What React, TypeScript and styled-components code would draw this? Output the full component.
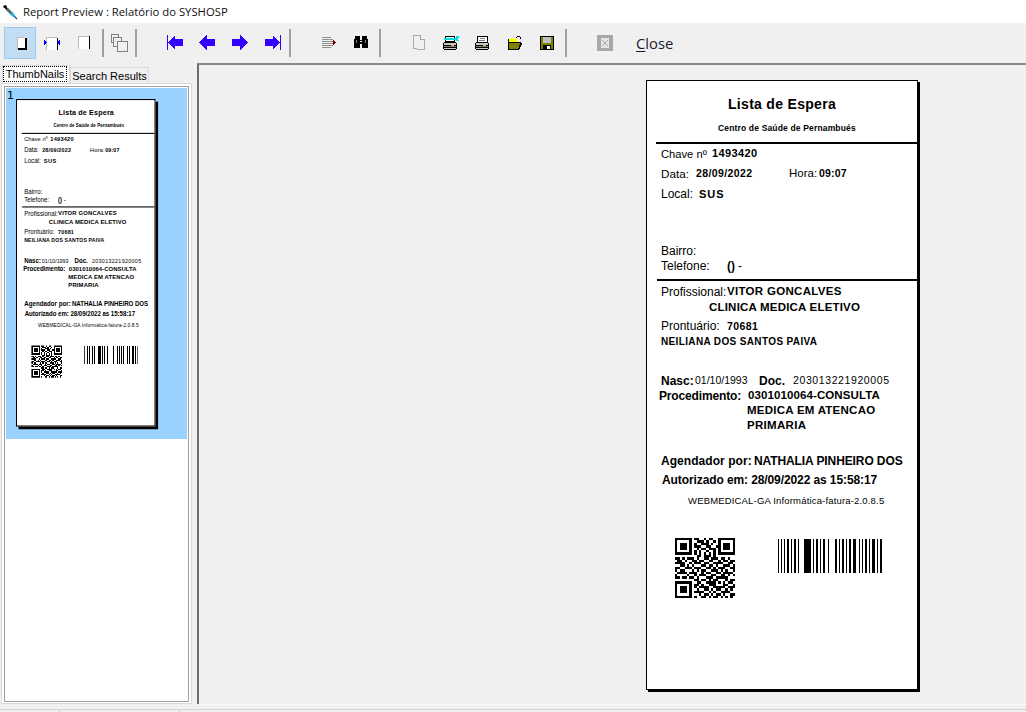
import styled, { createGlobalStyle } from 'styled-components'

const GlobalStyle = createGlobalStyle`
  html, body {
    margin: 0;
    padding: 0;
    background: #f0f0f0;
    overflow: hidden;
  }
`

type FieldData = { x: number; base: number; size: number; bold?: boolean; sp?: number; text: string }

const fields: FieldData[] = [
  { x: 81, base: 28, size: 14, bold: true, sp: 0.3, text: 'Lista de Espera' },
  { x: 71, base: 50, size: 8.5, bold: true, sp: 0.16, text: 'Centro de Saúde de Pernambués' },
  { x: 14, base: 77, size: 11.2, text: 'Chave nº' },
  { x: 65, base: 76, size: 11, bold: true, sp: 0.4, text: '1493420' },
  { x: 14, base: 97, size: 11.7, text: 'Data:' },
  { x: 49, base: 96, size: 10.5, bold: true, sp: 0.4, text: '28/09/2022' },
  { x: 142, base: 97, size: 11.5, text: 'Hora:' },
  { x: 172, base: 96, size: 10.5, bold: true, sp: 0.2, text: '09:07' },
  { x: 14, base: 117, size: 12, text: 'Local:' },
  { x: 52, base: 117, size: 11, bold: true, sp: 1, text: 'SUS' },
  { x: 14, base: 174, size: 12, text: 'Bairro:' },
  { x: 14, base: 189, size: 12, text: 'Telefone:' },
  { x: 80, base: 189, size: 12, bold: true, text: '()' },
  { x: 91, base: 189, size: 12, text: '-' },
  { x: 14, base: 215, size: 12, text: 'Profissional:' },
  { x: 80, base: 215, size: 11.5, bold: true, sp: 0.3, text: 'VITOR GONCALVES' },
  { x: 62, base: 231, size: 11.5, bold: true, sp: 0.2, text: 'CLINICA MEDICA ELETIVO' },
  { x: 14, base: 249, size: 12, text: 'Prontuário:' },
  { x: 80, base: 249, size: 10.5, bold: true, sp: 0.4, text: '70681' },
  { x: 14, base: 264, size: 10, bold: true, sp: 0.36, text: 'NEILIANA DOS SANTOS PAIVA' },
  { x: 14, base: 304, size: 12, bold: true, text: 'Nasc:' },
  { x: 48, base: 303, size: 10.5, text: '01/10/1993' },
  { x: 112, base: 304, size: 12, bold: true, text: 'Doc.' },
  { x: 146, base: 303, size: 10.5, sp: 0.6, text: '203013221920005' },
  { x: 12, base: 319, size: 12, bold: true, sp: -0.15, text: 'Procedimento:' },
  { x: 101, base: 319, size: 11.5, bold: true, sp: 0.1, text: '0301010064-CONSULTA' },
  { x: 100, base: 334, size: 11.5, bold: true, sp: 0.25, text: 'MEDICA EM ATENCAO' },
  { x: 100, base: 349, size: 11.5, bold: true, sp: 0.3, text: 'PRIMARIA' },
  { x: 14, base: 384, size: 12, bold: true, sp: 0.05, text: 'Agendador por:' },
  { x: 107, base: 384, size: 12, bold: true, sp: -0.1, text: 'NATHALIA PINHEIRO DOS' },
  { x: 15, base: 403, size: 12, bold: true, sp: -0.1, text: 'Autorizado em: 28/09/2022 as 15:58:17' },
  { x: 41, base: 423, size: 9.5, sp: 0.17, text: 'WEBMEDICAL-GA Informática-fatura-2.0.8.5' },
]

const qrRows = [
  '1111111011001011001111111',
  '1000001001110100101000001',
  '1011101010011101001011101',
  '1011101011100110011011101',
  '1011101001011011101011101',
  '1000001010100100101000001',
  '1111111010101010101111111',
  '0000000001101110100000000',
  '1101011101001101110110100',
  '0110100110110011001011011',
  '1111001011101100111100110',
  '0011010100011011010011101',
  '1100111011100110101110011',
  '1011000101011001110101001',
  '0111101110010110011011110',
  '1000010010111001100110101',
  '1101101101000111011111000',
  '0000000011011010110001011',
  '1111111001100111101010110',
  '1000001011010011100011001',
  '1011101010111100111110111',
  '1011101001001101011001010',
  '1011101011110010100111100',
  '1000001000101101011010011',
  '1111111010011010110101010',
]

// [offset, width] of each bar, from the left edge of the barcode
const bars = [
  [0, 1], [3, 1], [6, 1], [9, 2], [13, 1], [16, 2], [20, 1], [26, 7], [35, 1], [38, 2], [42, 1], [45, 2],
  [50, 1], [57, 2], [61, 1], [64, 2], [68, 1], [71, 2], [75, 3], [81, 1], [84, 1], [87, 2], [91, 1], [94, 3],
  [99, 1], [102, 2],
]

const QrCode = () => (
  <QrSvg viewBox="0 0 25 25">
    {qrRows.map((row, y) =>
      row.split('').map((c, x) => (c === '1' ? <rect key={`${x}-${y}`} x={x} y={y} width="1" height="1" /> : null)),
    )}
  </QrSvg>
)

const Barcode = () => (
  <BarSvg viewBox="0 0 104 34">
    {bars.map(([x, w]) => (
      <rect key={x} x={x} y="0" width={w} height="34" />
    ))}
  </BarSvg>
)

const ReportPage = ({ thumb }: { thumb?: boolean }) => (
  <Page $thumb={thumb}>
    {fields.map((f) => (
      <Field key={f.text + f.x} $x={f.x} $base={f.base} $size={f.size} $bold={f.bold} $sp={f.sp}>
        {f.text}
      </Field>
    ))}
    <Rule $y={61} $x={9} />
    <Rule $y={198} $x={10} />
    <QrCode />
    <Barcode />
  </Page>
)

const Ico = ({ children }: { children: React.ReactNode }) => (
  <IcoSvg viewBox="0 0 20 20" width="20" height="20">
    {children}
  </IcoSvg>
)

const BLUE = '#3300ff'

const PageOneIcon = () => (
  <Ico>
    <rect x="7" y="4" width="9" height="12" fill="#fff" />
    <path d="M7 4h8v1H8v11H7z" fill="#bbb" />
    <path d="M15 5h2v12H8v-2h7z" fill="#000" />
  </Ico>
)

const PageWidthIcon = () => (
  <Ico>
    <rect x="4" y="4" width="12" height="13" fill="#fff" />
    <path d="M4 4h11v1H5v12H4z" fill="#bbb" />
    <rect x="15" y="5" width="1" height="12" fill="#000" />
    <path d="M2 7v5l3-2.5zM18 7v5l-3-2.5z" fill="#0000ff" />
  </Ico>
)

const PageFullIcon = () => (
  <Ico>
    <rect x="4" y="3" width="11" height="13" fill="#fff" />
    <path d="M4 3h11v1H5v12H4z" fill="#bbb" />
    <rect x="15" y="3" width="1" height="13" fill="#000" />
  </Ico>
)

const MultiPageIcon = () => (
  <Ico>
    <g fill="#f0f0f0" stroke="#808080" strokeWidth="1">
      <rect x="1" y="1" width="7" height="8" />
      <rect x="3" y="4" width="8" height="9" />
      <rect x="7" y="8" width="10" height="10" />
    </g>
  </Ico>
)

const FirstIcon = () => (
  <Ico>
    <rect x="1" y="2" width="1" height="15" fill={BLUE} />
    <polygon points="2,9.5 9,2 9,6 17,6 17,13 9,13 9,17" fill={BLUE} />
  </Ico>
)
const PrevIcon = () => (
  <Ico>
    <polygon points="1,9.5 9,2 9,6 17,6 17,13 9,13 9,17" fill={BLUE} />
  </Ico>
)
const NextIcon = () => (
  <Ico>
    <polygon points="18,9.5 10,2 10,6 2,6 2,13 10,13 10,17" fill={BLUE} />
  </Ico>
)
const LastIcon = () => (
  <Ico>
    <rect x="18" y="2" width="1" height="15" fill={BLUE} />
    <polygon points="18,9.5 11,2 11,6 3,6 3,13 11,13 11,17" fill={BLUE} />
  </Ico>
)

const ListIcon = () => (
  <Ico>
    <g fill="#909090">
      <rect x="3" y="4" width="9" height="1" />
      <rect x="3" y="6" width="11" height="1" />
      <rect x="3" y="8" width="11" height="1" />
      <rect x="3" y="10" width="11" height="1" />
      <rect x="3" y="12" width="11" height="1" />
      <rect x="3" y="14" width="9" height="1" />
    </g>
    <polygon points="14,7 17,9.5 14,13" fill="#800000" />
  </Ico>
)

const FindIcon = () => (
  <Ico>
    <path d="M4 3h5v4h2V3h5v3h1v9h-6v-4H9v4H3V6h1z" fill="#000" />
    <rect x="5" y="7" width="1" height="3" fill="#808080" />
    <rect x="14" y="7" width="1" height="3" fill="#808080" />
    <rect x="9" y="8" width="2" height="1" fill="#fff" />
  </Ico>
)

const CopyOffIcon = () => (
  <Ico>
    <g fill="#f0f0f0" stroke="#a8a8a8" strokeWidth="1">
      <rect x="4.5" y="2.5" width="7" height="13" />
      <path d="M11.5 6.5h4v10h-7v-1" />
    </g>
  </Ico>
)

const PrinterBody = () => (
  <>
    <path d="M2 10h1V9h12v1h1v6h-1v1H3v-1H2z" fill="#000" />
    <rect x="3" y="10" width="12" height="2" fill="#c8c8c8" />
    <rect x="3" y="13" width="12" height="1" fill="#808080" />
    <rect x="3" y="15" width="12" height="1" fill="#c8c8c8" />
    <rect x="10" y="12" width="3" height="1" fill="#e0c020" />
  </>
)

const PrintSetupIcon = () => (
  <Ico>
    <PrinterBody />
    <rect x="4" y="3" width="10" height="6" fill="#000" />
    <rect x="5" y="4" width="8" height="4" fill="#fff" />
    <path d="M3 5h12V3h3v2h-1v2h1v1h-3V7H3z" fill="#00e0e0" />
    <rect x="5" y="9" width="10" height="1" fill="#000" />
  </Ico>
)

const PrintIcon = () => (
  <Ico>
    <PrinterBody />
    <polygon points="5,3 14,3 14,9 4,9" fill="#fff" stroke="#000" strokeWidth="1" />
    <rect x="7" y="5" width="5" height="1" fill="#808080" />
    <rect x="6" y="7" width="6" height="1" fill="#808080" />
  </Ico>
)

const OpenIcon = () => (
  <Ico>
    <path d="M3 6h3V5h3v1h3v3H3z" fill="#ffff00" />
    <path d="M3 9h13l-3 7H3z" fill="#808000" />
    <path d="M3 6h1v10h9v1H3z" fill="#000" />
    <path d="M4 9h12v1H4zM15 10h2v1l-3 6h-1z" fill="#000" />
    <path d="M11 4h1V3h3v1h1v2h-1V4h-3v1h-1z" fill="#000" />
  </Ico>
)

const SaveIcon = () => (
  <Ico>
    <rect x="3" y="3" width="14" height="14" fill="#000" />
    <rect x="4" y="4" width="12" height="12" fill="#808000" />
    <rect x="6" y="4" width="8" height="6" fill="#c0c0c0" />
    <rect x="6" y="12" width="8" height="5" fill="#000" />
    <rect x="10" y="13" width="3" height="3" fill="#fff" />
  </Ico>
)

const StopIcon = () => (
  <Ico>
    <rect x="2" y="2" width="16" height="16" fill="#a8a8a8" />
    <rect x="6" y="5" width="8" height="10" fill="#e6e6e6" />
    <path d="M7 13l6-6M7 7l6 6" stroke="#a8a8a8" strokeWidth="1" fill="none" />
  </Ico>
)

export default function App() {
  return (
    <Window>
      <GlobalStyle />
      <TitleBar>
        <AppIcon viewBox="0 0 16 16">
          <path d="M1 2l3-1 1 2-3 1z" fill="#000" />
          <path d="M3 3l3 3" stroke="#000" strokeWidth="2" />
          <path d="M5 5l5 5" stroke="#5a6a70" strokeWidth="3" />
          <path d="M9 9l3 3" stroke="#20b0d0" strokeWidth="3" />
          <path d="M12 12l3 3" stroke="#0050a0" strokeWidth="1.2" />
        </AppIcon>
        Report Preview : Relatório do SYSHOSP
      </TitleBar>

      <Toolbar>
        <ToolButton $active><PageOneIcon /></ToolButton>
        <ToolButton><PageWidthIcon /></ToolButton>
        <ToolButton><PageFullIcon /></ToolButton>
        <Separator $ml={2} />
        <ToolButton $w={31}><MultiPageIcon /></ToolButton>
        <Separator $mr={23} />
        <ToolButton><FirstIcon /></ToolButton>
        <ToolButton><PrevIcon /></ToolButton>
        <ToolButton><NextIcon /></ToolButton>
        <ToolButton><LastIcon /></ToolButton>
        <Separator $ml={1} $mr={22} />
        <ToolButton><ListIcon /></ToolButton>
        <ToolButton><FindIcon /></ToolButton>
        <Separator $ml={2} $mr={21} />
        <ToolButton $w={33}><CopyOffIcon /></ToolButton>
        <ToolButton><PrintSetupIcon /></ToolButton>
        <ToolButton><PrintIcon /></ToolButton>
        <ToolButton><OpenIcon /></ToolButton>
        <ToolButton><SaveIcon /></ToolButton>
        <Separator $ml={2} $mr={22} />
        <ToolButton><StopIcon /></ToolButton>
        <CloseLabel><u>C</u>lose</CloseLabel>
      </Toolbar>

      <Body>
        <SidePanel>
          <Tabs>
            <ActiveTab><FocusRing>ThumbNails</FocusRing></ActiveTab>
            <Tab>Search Results</Tab>
          </Tabs>
          <TabPanel>
            <ThumbList>
              <ThumbItem>
                <ThumbNumber>1</ThumbNumber>
                <ThumbFrame>
                  <ThumbScale>
                    <ReportPage thumb />
                  </ThumbScale>
                </ThumbFrame>
              </ThumbItem>
            </ThumbList>
          </TabPanel>
        </SidePanel>
        <Preview>
          <ReportPage />
        </Preview>
      </Body>

      <StatusBar>
        <StatusCell $w={60} />
        <StatusCell $w={120} />
      </StatusBar>
    </Window>
  )
}

const Window = styled.div`
  width: 1026px;
  height: 712px;
  display: flex;
  flex-direction: column;
  overflow: hidden;
  background: #f0f0f0;
  font-family: 'Open Sans', 'Liberation Sans', sans-serif;
  color: #000;
`

const TitleBar = styled.div`
  height: 23px;
  flex: none;
  background: #fff;
  display: flex;
  align-items: center;
  padding-left: 2px;
  font-size: 11.3px;
  color: #111;
`

const AppIcon = styled.svg`
  width: 16px;
  height: 16px;
  margin-right: 5px;
`

const Toolbar = styled.div`
  height: 40px;
  flex: none;
  display: flex;
  align-items: center;
  padding-left: 4px;
  box-sizing: border-box;
`

const ToolButton = styled.div<{ $active?: boolean; $w?: number }>`
  width: ${(p) => p.$w ?? 32}px;
  height: 32px;
  box-sizing: border-box;
  display: flex;
  align-items: center;
  justify-content: center;
  background: ${(p) => (p.$active ? '#c1dcf3' : 'transparent')};
  border: 1px solid ${(p) => (p.$active ? '#99c9ef' : 'transparent')};
`

const IcoSvg = styled.svg`
  flex: none;
  shape-rendering: crispEdges;
`

const Separator = styled.div<{ $ml?: number; $mr?: number }>`
  width: 2px;
  height: 28px;
  flex: none;
  background: #a0a0a0;
  margin-left: ${(p) => p.$ml ?? 0}px;
  margin-right: ${(p) => p.$mr ?? 0}px;
`

const CloseLabel = styled.div`
  margin-left: 15px;
  font-size: 14.8px;
  color: #1a1a2e;
  u {
    text-underline-offset: 2px;
  }
`

const Body = styled.div`
  flex: 1;
  min-height: 0;
  display: flex;
`

const SidePanel = styled.div`
  width: 197px;
  flex: none;
  display: flex;
  flex-direction: column;
  padding: 2px 0 0 1px;
  box-sizing: border-box;
`

const Tabs = styled.div`
  height: 18px;
  flex: none;
  display: flex;
  align-items: flex-end;
  font-family: 'Liberation Sans', Arial, sans-serif;
  font-size: 11px;
  white-space: nowrap;
`

const ActiveTab = styled.div`
  height: 18px;
  width: 68px;
  box-sizing: border-box;
  margin-left: 1px;
  padding-right: 2px;
  background: #fff;
  border: 1px solid #d9d9d9;
  border-bottom: none;
`

const FocusRing = styled.div`
  height: 16px;
  border: 1px dotted #000;
  box-sizing: border-box;
  display: flex;
  align-items: center;
  justify-content: center;
  line-height: 1;
`

const Tab = styled.div`
  height: 16px;
  width: 79px;
  box-sizing: border-box;
  background: #f0f0f0;
  border: 1px solid #d9d9d9;
  border-bottom: none;
  display: flex;
  align-items: center;
  justify-content: center;
`

const TabPanel = styled.div`
  width: 191px;
  height: 621px;
  flex: none;
  box-sizing: border-box;
  background: #fff;
  border: 1px solid #d9d9d9;
  padding: 2px;
`

const ThumbList = styled.div`
  height: 616px;
  width: 185px;
  box-sizing: border-box;
  border: 1px solid #a0a0a0;
  padding: 1px;
  background: #fff;
  overflow: hidden;
`

const ThumbItem = styled.div`
  position: relative;
  height: 351px;
  background: #99d1ff;
  padding: 11px 0 0 10px;
  box-sizing: border-box;
`

const ThumbNumber = styled.div`
  position: absolute;
  left: 1px;
  top: 1px;
  font-family: 'DejaVu Sans', sans-serif;
  font-size: 11px;
  line-height: 13px;
`

const ThumbFrame = styled.div`
  width: 139px;
  height: 327px;
`

const ThumbScale = styled.div`
  width: 272px;
  transform-origin: 0 0;
  transform: scale(0.513, 0.537);
`

const Preview = styled.div`
  flex: 1;
  min-width: 0;
  height: 641px;
  box-sizing: border-box;
  background: #f0f0f0;
  border-left: 2px solid #6e6e6e;
  border-top: 2px solid #8a8a8a;
  padding: 15px 0 0 447px;
  box-shadow: 0 1px 0 #fafafa;
`

const Page = styled.div<{ $thumb?: boolean }>`
  position: relative;
  width: 272px;
  height: 610px;
  box-sizing: border-box;
  background: #fff;
  border: ${(p) => (p.$thumb ? 2 : 1)}px solid #000;
  box-shadow: ${(p) => (p.$thumb ? '5px 5px' : '2px 2px')} 0 #000;
  font-family: 'Liberation Sans', Arial, sans-serif;
  color: #000;
`

const Field = styled.div<{ $x: number; $base: number; $size: number; $bold?: boolean; $sp?: number }>`
  position: absolute;
  left: ${(p) => p.$x}px;
  top: ${(p) => p.$base - p.$size * 0.8465}px;
  font-size: ${(p) => p.$size}px;
  font-weight: ${(p) => (p.$bold ? 700 : 400)};
  letter-spacing: ${(p) => p.$sp ?? 0}px;
  line-height: 1;
  white-space: pre;
`

const Rule = styled.div<{ $y: number; $x: number }>`
  position: absolute;
  left: ${(p) => p.$x}px;
  right: 0;
  top: ${(p) => p.$y}px;
  height: 2px;
  background: #000;
`

const QrSvg = styled.svg`
  position: absolute;
  left: 28px;
  top: 457px;
  width: 60px;
  height: 60px;
  shape-rendering: crispEdges;
`

const BarSvg = styled.svg`
  position: absolute;
  left: 131px;
  top: 458px;
  width: 104px;
  height: 34px;
  shape-rendering: crispEdges;
`

const StatusBar = styled.div`
  flex: none;
  display: flex;
  box-sizing: border-box;
  border-top: 1px solid #d4d4d4;
  margin-top: 5px;
  height: 3px;
`

const StatusCell = styled.div<{ $w: number }>`
  width: ${(p) => p.$w}px;
  box-sizing: border-box;
  border-right: 1px solid #c8c8c8;
`
